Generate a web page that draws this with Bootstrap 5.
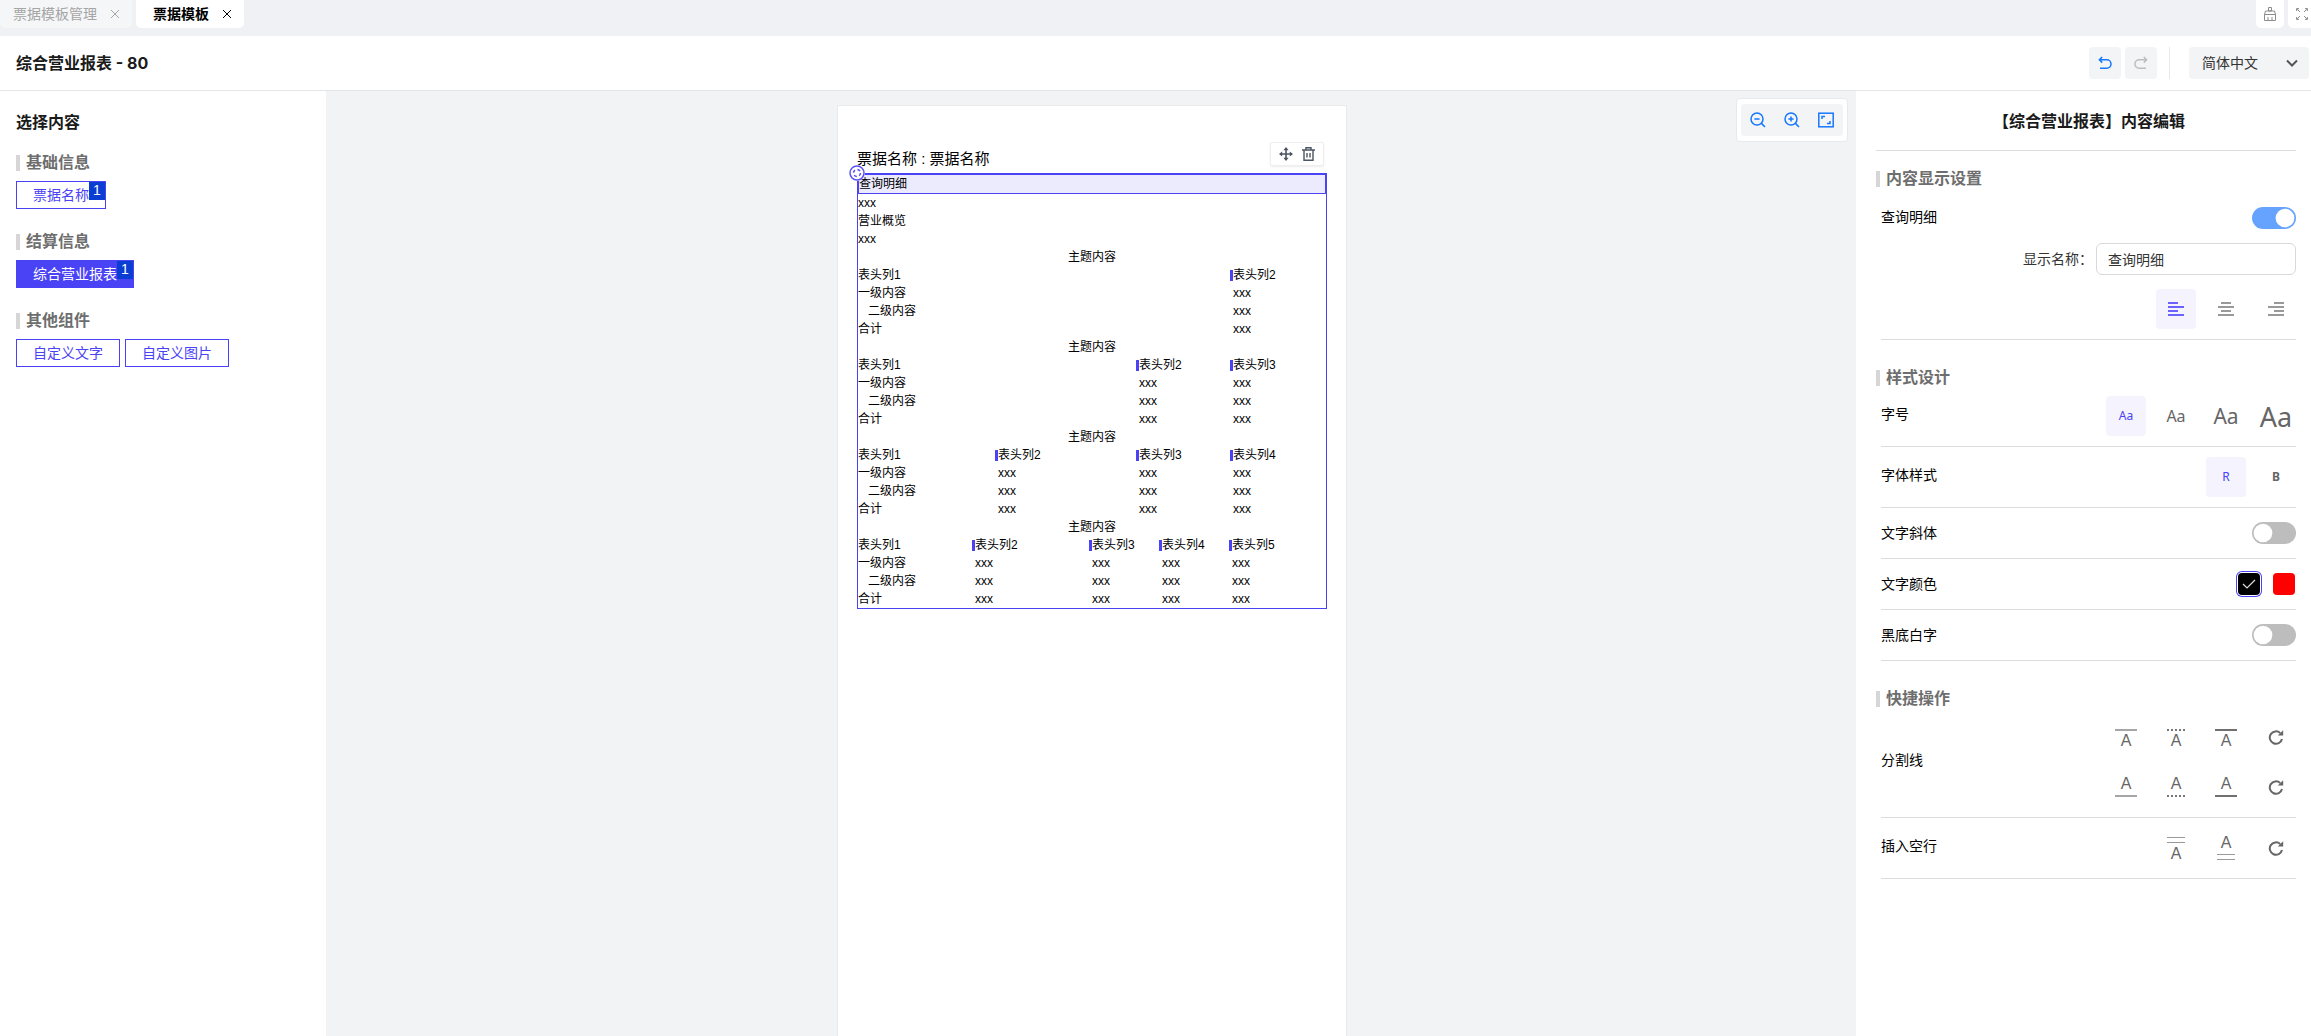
<!DOCTYPE html>
<html lang="zh-CN">
<head>
  <meta charset="UTF-8" />
  <title>票据模板</title>
  <meta name="viewport" content="width=device-width, initial-scale=1" />
  <link href="https://cdn.jsdelivr.net/npm/bootstrap@5.3.3/dist/css/bootstrap.min.css" rel="stylesheet">
  <style>
    html, body { height: 100%; }
    body {
      font-family: "Liberation Sans", "Noto Sans CJK SC", sans-serif;
      font-size: 14px;
      color: #000;
      background: #f0f1f5;
      overflow: hidden;
    }
    svg { display: block; }

    /* tabs */
    .tab-bar { height: 36px; background: #f0f1f5; overflow: hidden; }
    .tab-item { height: 28px; border-radius: 0 0 5px 5px; line-height: 28px; }
    .tab-first { width: 132px; padding-left: 13px; background: #f5f6f8; color: #a5a5a5; }
    .tab-active { width: 108px; margin-left: 4px; padding-left: 17px; background: #fff; font-weight: 700; }
    .tab-close { width: 10px; margin-left: 13px; }
    .tab-tool { width: 28px; height: 28px; background: #fff; border-radius: 0 0 5px 5px; flex: none; }
    .tab-tools { margin-right: -5px; gap: 4px; }

    /* header */
    .top-bar { height: 55px; background: #fff; border-bottom: 1px solid #e4e5e7; padding: 0 2px 0 16px; }
    .top-title { font-family: Inter, "Noto Sans CJK SC", sans-serif; font-size: 16px; font-weight: 700; color: #1a1a1a; }
    .hist-btn { width: 32px; height: 32px; background: #f3f4f6; border-radius: 4px; padding: 0; border: 0; }
    .hist-sep { width: 1px; height: 32px; background: #e8e8e8; margin: 0 19px 0 12px; }
    .lang-box { width: 120px; height: 32px; background: #f3f4f6; border-radius: 4px; padding: 0 11px 0 13px; color: #333; }

    /* page body */
    .work-area { height: 945px; }
    .side-left { width: 326px; flex: none; background: #fff; padding: 24px 16px; }
    .side-title { font-size: 16px; line-height: 16px; font-weight: 700; color: #1a1a1a; }
    .sec-head { font-size: 16px; line-height: 16px; font-weight: 700; color: #6e6e6e; border-left: 4px solid #d6d6d6; padding-left: 6px; }
    .comp-sec { margin-top: 25px; }
    .comp-line { margin-top: 10px; }
    .comp-pair { gap: 5px; }
    .comp-btn {
      height: 28px; padding: 0 0 0 16px; border: 1px solid #4a42f5; border-radius: 0;
      background: #fff; color: #4a42f5; font-size: 14px; line-height: 26px;
    }
    .comp-btn:hover { background: #fff; color: #4a42f5; border-color: #4a42f5; }
    .comp-plain { padding: 0 16px; }
    .comp-on, .comp-on:hover { background: #4a42f5; color: #fff; }
    .comp-num { width: 16px; height: 18px; background: #0a3dd1; color: #fff; line-height: 16px; text-align: center; flex: none; }

    /* canvas */
    .canvas-area { background: #f2f3f5; padding: 14px 0 0 2px; min-width: 0; }
    .paper-sheet { width: 510px; height: 940px; background: #fff; border: 1px solid #e9eaec; border-bottom: 0; padding: 43px 19px 0; }
    .paper-title { font-size: 15px; line-height: 20px; margin-bottom: 4px; }
    .bill-box { border: 1px solid #4a42f5; font-size: 12px; line-height: 18px; }
    .bill-row { min-height: 18px; }
    .bill-picked { height: 20px; background: #ebebfd; border: 1px solid #4a42f5; border-right-width: 2px; margin-right: -1px; }
    .bill-center { text-align: center; }
    .bill-head { border-left: 3px solid #4a42f5; height: 11px; line-height: 11px; margin-top: 4px; }
    .bill-val { padding-left: 3px; }
    .bill-sub { padding-left: 10px; }
    .bill-grid { display: grid; }
    .drag-dot { left: -9px; top: -9px; width: 16px; height: 16px; background: #fff; border-radius: 50%; }
    .block-tools {
      right: 2px; top: -32px; width: 54px; height: 24px; background: #fff;
      border: 1px solid #eee; border-radius: 2px; box-shadow: 0 1px 2px rgba(0,0,0,.08); gap: 9px;
    }
    .zoom-tools { right: 8px; top: 7px; padding: 5px 4px; background: #fff; border: 1px solid #e8e9eb; border-radius: 4px; }
    .zoom-inner { width: 102px; height: 32px; background: #f3f4f6; border-radius: 3px; padding: 0 9px; }

    /* right panel */
    .side-right { width: 455px; flex: none; background: #fff; padding: 0 15px 0 20px; }
    .panel-title { height: 60px; border-bottom: 1px solid #dcdcdc; font-size: 16px; font-weight: 700; color: #1a1a1a; padding-top: 2px; padding-left: 6px; }
    .sec-gap { margin-top: 30px; }
    .sec-first { margin-top: 20px; }
    .set-block { margin-left: 5px; }
    .set-row { border-bottom: 1px solid #dcdcdc; }
    .row-btns { padding: 10px 0; }
    .row-btns > span { margin-top: -3px; }
    .row-switch { padding: 14px 0; }
    .switch-top { margin-top: 20px; }
    .switch-top > span { margin-top: -2px; }
    .name-top { margin-top: 14px; }
    .align-top-row { margin-top: 14px; padding-bottom: 10px; }
    .icon-btn {
      width: 40px; height: 40px; padding: 0; border: 0; border-radius: 4px; background: transparent; color: #666;
    }
    .icon-btn.is-on { background: #f4f3fe; color: #4a42f5; }
    .btn-group-flat { gap: 10px; }
    .aa-text { font-family: "Noto Sans", sans-serif; line-height: 1; }
    .size-12 { font-size: 12px; }
    .size-16 { font-size: 16px; }
    .size-21 { font-size: 21px; }
    .size-27 { font-size: 27px; }
    .form-switch.flat-switch { padding: 0; margin: 0; min-height: 0; height: 22px; }
    .flat-switch .form-check-input {
      width: 44px; height: 22px; margin: 0; float: none; display: block; border: 0; box-shadow: none;
      background-color: #bdbdbd;
      background-image: url("data:image/svg+xml,%3csvg xmlns='http://www.w3.org/2000/svg' viewBox='-4 -4 8 8'%3e%3ccircle r='3.4' fill='%23fff'/%3e%3c/svg%3e");
    }
    .flat-switch .form-check-input:checked { background-color: #66a3ff; }
    .name-label { color: #333; margin-right: 3px; }
    .name-input.form-control { width: 200px; height: 32px; min-height: 0; padding: 0 11px; font-size: 14px; border: 1px solid #d9d9d9; border-radius: 6px; color: #333; }
    .swatch { width: 22px; height: 22px; border-radius: 4px; }
    .swatch-black { background: #000; box-shadow: 0 0 0 1px #fff, 0 0 0 2px #4a42f5; margin-right: 13px; }
    .swatch-red { background: #f00; margin-right: 1px; }
    .rule-icon { font-size: 16px; line-height: 12px; flex-direction: column; align-items: center; color: #666; }
    .rule-top { padding-top: 12px; }
    .rule-bottom { padding-top: 11px; }
    .rule-line { display: block; height: 2px; width: 22px; flex: none; }
    .line-thin { background: #a6a6a6; }
    .line-dot { width: 18px; background: repeating-linear-gradient(90deg, #777 0 2px, transparent 2px 4px); }
    .line-bold { background: #707070; }
    .line-double { width: 18px; height: 6px; border-top: 1px solid #999; border-bottom: 1px solid #999; }
    .rule-top .rule-line { margin-bottom: 4px; }
    .rule-bottom .rule-line { margin-top: 5px; }
    .blank-top { padding-top: 9px; }
    .blank-top .rule-line { margin-bottom: 5px; }
    .blank-bottom { padding-top: 9px; }
    .blank-bottom .rule-line { margin-top: 5px; }
  </style>
</head>
<body>
  <svg width="0" height="0" class="position-absolute">
    <symbol id="ic-refresh" viewBox="0 0 16 16">
      <path d="M14 10A6.2 6.2 0 1 1 12.2 4" fill="none" stroke="currentColor" stroke-width="2"/>
      <path d="M9.8 6.6h5.4V1.2z" fill="currentColor"/>
    </symbol>
    <symbol id="ic-x" viewBox="0 0 10 10">
      <path d="M1 1l8 8M9 1l-8 8" fill="none" stroke="currentColor" stroke-width="1"/>
    </symbol>
  </svg>

  <div class="tab-bar d-flex justify-content-between">
    <div class="d-flex">
      <div class="tab-item tab-first d-flex align-items-center">票据模板管理<svg class="tab-close" width="10" height="10"><use href="#ic-x"/></svg></div>
      <div class="tab-item tab-active d-flex align-items-center">票据模板<svg class="tab-close" width="10" height="10"><use href="#ic-x"/></svg></div>
    </div>
    <div class="tab-tools d-flex">
      <div class="tab-tool d-flex align-items-center justify-content-center">
        <svg width="14" height="14" viewBox="0 0 14 14" fill="none" stroke="#8c8c8c"><path d="M5.5 .5h3v3.5h-3zM2.5 4h9l1 3.5h-11zM1.5 7.5h11v6h-11zM5 10v3.5M9 10v3.5"/></svg>
      </div>
      <div class="tab-tool d-flex align-items-center justify-content-center">
        <svg width="12" height="12" viewBox="0 0 12 12" fill="none" stroke="#8c8c8c"><path d="M4 4L.8.8M.6 3V.6H3M8 4l3.2-3.2M9 .6h2.4V3M4 8l-3.2 3.2M.6 9v2.4H3M8 8l3.2 3.2M11.4 9v2.4H9"/></svg>
      </div>
    </div>
  </div>

  <div class="top-bar d-flex align-items-center justify-content-between">
    <div class="top-title">综合营业报表 - 80</div>
    <div class="d-flex align-items-center">
      <button class="hist-btn d-flex align-items-center justify-content-center me-1" type="button" aria-label="撤销">
        <svg width="14" height="14" viewBox="0 0 14 14" fill="none" stroke="#1677ff" stroke-width="1.5"><path d="M4.2 1L1.4 3.8l2.8 2.8M1.4 3.8h7.4a3.9 3.9 0 0 1 0 8.4H2"/></svg>
      </button>
      <button class="hist-btn d-flex align-items-center justify-content-center" type="button" aria-label="重做">
        <svg width="14" height="14" viewBox="0 0 14 14" fill="none" stroke="#bdbdbd" stroke-width="1.5"><path d="M9.8 1l2.8 2.8-2.8 2.8M12.6 3.8H5.2a3.9 3.9 0 0 0 0 8.4H12"/></svg>
      </button>
      <div class="hist-sep"></div>
      <div class="lang-box d-flex align-items-center justify-content-between">
        <span>简体中文</span>
        <svg width="12" height="8" viewBox="0 0 12 8" fill="none" stroke="#555" stroke-width="2"><path d="M1 1.5l5 5 5-5"/></svg>
      </div>
    </div>
  </div>

  <div class="work-area d-flex">
    <aside class="side-left">
      <div class="side-title">选择内容</div>
      <div class="sec-head mt-4">基础信息</div>
      <div class="d-flex comp-line">
        <button class="btn comp-btn d-flex" type="button">票据名称<span class="comp-num">1</span></button>
      </div>
      <div class="sec-head comp-sec">结算信息</div>
      <div class="d-flex comp-line">
        <button class="btn comp-btn comp-on d-flex" type="button">综合营业报表<span class="comp-num">1</span></button>
      </div>
      <div class="sec-head comp-sec">其他组件</div>
      <div class="d-flex comp-line comp-pair">
        <button class="btn comp-btn comp-plain" type="button">自定义文字</button>
        <button class="btn comp-btn comp-plain" type="button">自定义图片</button>
      </div>
    </aside>

    <main class="canvas-area flex-grow-1 d-flex justify-content-center position-relative">
      <div class="paper-sheet">
        <div class="paper-title">票据名称 : 票据名称</div>
        <div class="bill-box position-relative" id="billBox">
          <span class="drag-dot position-absolute">
            <svg width="16" height="16" viewBox="0 0 16 16" fill="none" stroke="#5a52f5"><circle cx="8" cy="8" r="7" stroke-width="1.5"/><circle cx="8" cy="8" r="3.5" stroke-width="1.5" stroke-dasharray="3 2.5"/></svg>
          </span>
          <div class="block-tools position-absolute d-flex align-items-center justify-content-center">
            <svg width="14" height="14" viewBox="0 0 14 14" fill="none" stroke="#4b5563" stroke-width="1.6"><path d="M7 1v12M1 7h12"/><path d="M7 0L4.4 3.2h5.2zM7 14l-2.6-3.2h5.2zM0 7l3.2-2.6v5.2zM14 7l-3.2-2.6v5.2z" fill="#4b5563" stroke="none"/></svg>
            <svg width="13" height="14" viewBox="0 0 13 14" fill="none" stroke="#4b5563" stroke-width="1.4"><path d="M0 3h13M4 3V.7h5V3M2 3v10.3h9V3M5 6v4.5M8 6v4.5"/></svg>
          </div>
        </div>
      </div>
      <div class="zoom-tools position-absolute">
        <div class="zoom-inner d-flex align-items-center justify-content-between">
          <svg width="16" height="16" viewBox="0 0 16 16" fill="none" stroke="#1677ff" stroke-width="1.5"><circle cx="7" cy="7" r="6"/><path d="M4.4 7h5.2M11.4 11.4L15 15"/></svg>
          <svg width="16" height="16" viewBox="0 0 16 16" fill="none" stroke="#1677ff" stroke-width="1.5"><circle cx="7" cy="7" r="6"/><path d="M4.4 7h5.2M7 4.4v5.2M11.4 11.4L15 15"/></svg>
          <svg width="16" height="16" viewBox="0 0 16 16" fill="none" stroke="#1677ff" stroke-width="1.5"><rect x=".8" y="1.2" width="14.4" height="13.6"/><path d="M4 7V4.4h3M12 9v2.6H9"/></svg>
        </div>
      </div>
    </main>

    <aside class="side-right">
      <div class="panel-title d-flex align-items-center justify-content-center">【综合营业报表】内容编辑</div>

      <div class="sec-head sec-first">内容显示设置</div>
      <div class="set-block">
        <div class="d-flex justify-content-between align-items-center switch-top">
          <span>查询明细</span>
          <div class="form-check form-switch flat-switch"><input class="form-check-input" type="checkbox" checked aria-label="查询明细"></div>
        </div>
        <div class="d-flex justify-content-end align-items-center name-top">
          <span class="name-label">显示名称：</span>
          <input class="form-control name-input" type="text" value="查询明细">
        </div>
        <div class="set-row d-flex justify-content-end align-top-row">
          <div class="d-flex btn-group-flat">
            <button class="icon-btn is-on d-flex align-items-center justify-content-center" type="button" aria-label="左对齐">
              <svg width="16" height="14" viewBox="0 0 16 14" fill="#6c63ff"><path d="M0 0h10v2H0zM0 4h16v2H0zM0 8h10v2H0zM0 12h16v2H0z"/></svg>
            </button>
            <button class="icon-btn d-flex align-items-center justify-content-center" type="button" aria-label="居中">
              <svg width="16" height="14" viewBox="0 0 16 14" fill="#999"><path d="M3 0h10v2H3zM0 4h16v2H0zM3 8h10v2H3zM0 12h16v2H0z"/></svg>
            </button>
            <button class="icon-btn d-flex align-items-center justify-content-center" type="button" aria-label="右对齐">
              <svg width="16" height="14" viewBox="0 0 16 14" fill="#999"><path d="M6 0h10v2H6zM0 4h16v2H0zM6 8h10v2H6zM0 12h16v2H0z"/></svg>
            </button>
          </div>
        </div>
      </div>

      <div class="sec-head sec-gap">样式设计</div>
      <div class="set-block">
        <div class="set-row row-btns d-flex justify-content-between align-items-center">
          <span>字号</span>
          <div class="d-flex btn-group-flat">
            <button class="icon-btn is-on aa-text size-12" type="button">Aa</button>
            <button class="icon-btn aa-text size-16" type="button">Aa</button>
            <button class="icon-btn aa-text size-21" type="button">Aa</button>
            <button class="icon-btn aa-text size-27" type="button">Aa</button>
          </div>
        </div>
        <div class="set-row row-btns d-flex justify-content-between align-items-center">
          <span>字体样式</span>
          <div class="d-flex btn-group-flat">
            <button class="icon-btn is-on aa-text size-12" type="button">R</button>
            <button class="icon-btn aa-text size-12 fw-bold" type="button">B</button>
          </div>
        </div>
        <div class="set-row row-switch d-flex justify-content-between align-items-center">
          <span>文字斜体</span>
          <div class="form-check form-switch flat-switch"><input class="form-check-input" type="checkbox" aria-label="文字斜体"></div>
        </div>
        <div class="set-row row-switch d-flex justify-content-between align-items-center">
          <span>文字颜色</span>
          <div class="d-flex">
            <div class="swatch swatch-black d-flex align-items-center justify-content-center">
              <svg width="14" height="12" viewBox="0 0 14 12" fill="none" stroke="#ddd" stroke-width="1.2"><path d="M1 6l4 4 8-8"/></svg>
            </div>
            <div class="swatch swatch-red"></div>
          </div>
        </div>
        <div class="set-row row-switch d-flex justify-content-between align-items-center">
          <span>黑底白字</span>
          <div class="form-check form-switch flat-switch"><input class="form-check-input" type="checkbox" aria-label="黑底白字"></div>
        </div>
      </div>

      <div class="sec-head sec-gap">快捷操作</div>
      <div class="set-block">
        <div class="set-row row-btns d-flex justify-content-between align-items-center">
          <span>分割线</span>
          <div class="d-flex flex-column btn-group-flat">
            <div class="d-flex btn-group-flat">
              <div class="icon-btn rule-icon rule-top d-flex"><i class="rule-line line-thin"></i>A</div>
              <div class="icon-btn rule-icon rule-top d-flex"><i class="rule-line line-dot"></i>A</div>
              <div class="icon-btn rule-icon rule-top d-flex"><i class="rule-line line-bold"></i>A</div>
              <button class="icon-btn d-flex align-items-center justify-content-center" type="button" aria-label="重置"><svg width="16" height="16"><use href="#ic-refresh"/></svg></button>
            </div>
            <div class="d-flex btn-group-flat">
              <div class="icon-btn rule-icon rule-bottom d-flex">A<i class="rule-line line-thin"></i></div>
              <div class="icon-btn rule-icon rule-bottom d-flex">A<i class="rule-line line-dot"></i></div>
              <div class="icon-btn rule-icon rule-bottom d-flex">A<i class="rule-line line-bold"></i></div>
              <button class="icon-btn d-flex align-items-center justify-content-center" type="button" aria-label="重置"><svg width="16" height="16"><use href="#ic-refresh"/></svg></button>
            </div>
          </div>
        </div>
        <div class="set-row row-btns d-flex justify-content-between align-items-center">
          <span>插入空行</span>
          <div class="d-flex btn-group-flat">
            <div class="icon-btn rule-icon blank-top d-flex"><i class="rule-line line-double"></i>A</div>
            <div class="icon-btn rule-icon blank-bottom d-flex">A<i class="rule-line line-double"></i></div>
            <button class="icon-btn d-flex align-items-center justify-content-center" type="button" aria-label="重置"><svg width="16" height="16"><use href="#ic-refresh"/></svg></button>
          </div>
        </div>
      </div>
    </aside>
  </div>

  <script>
    // column start offsets of the four sample tables, in px from the left edge of the box
    const tables = [
      [0, 372],
      [0, 278, 372],
      [0, 137, 278, 372],
      [0, 114, 231, 301, 371]
    ];
    const boxWidth = 468;
    const box = document.getElementById('billBox');

    function addRow(html, cls) {
      const row = document.createElement('div');
      row.className = 'bill-row ' + (cls || '');
      row.innerHTML = html;
      box.appendChild(row);
      return row;
    }

    addRow('查询明细', 'bill-picked');
    addRow('xxx');
    addRow('营业概览');
    addRow('xxx');

    tables.forEach(cols => {
      const widths = cols.map((c, i) => (i + 1 < cols.length ? cols[i + 1] : boxWidth) - c);
      const template = widths.map(w => w + 'px').join(' ');
      addRow('主题内容', 'bill-center');
      const rest = cols.slice(1);
      const rows = [
        ['表头列1', rest.map((c, i) => `<div><div class="bill-head">表头列${i + 2}</div></div>`)],
        ['一级内容', rest.map(() => '<div class="bill-val">xxx</div>')],
        ['<span class="bill-sub">二级内容</span>', rest.map(() => '<div class="bill-val">xxx</div>')],
        ['合计', rest.map(() => '<div class="bill-val">xxx</div>')]
      ];
      rows.forEach(r => {
        const row = addRow(`<div>${r[0]}</div>${r[1].join('')}`, 'bill-grid');
        row.style.gridTemplateColumns = template;
      });
    });
  </script>
</body>
</html>
